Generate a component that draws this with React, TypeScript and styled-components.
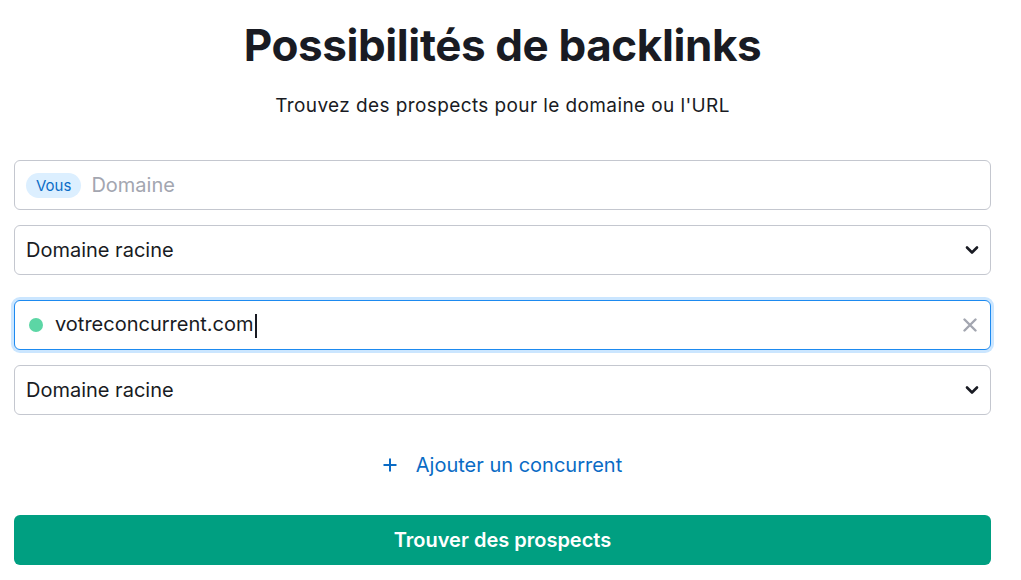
import React from "react"
import styled, { createGlobalStyle } from "styled-components"

const GlobalStyle = createGlobalStyle`
  body {
    margin: 0;
    background: #ffffff;
    font-family: Inter, "Noto Sans", sans-serif;
    color: #191b23;
  }
`

const Page = styled.div`
  width: 977px;
  margin-left: 14px;
  display: flex;
  flex-direction: column;
  align-items: stretch;
`

const Title = styled.h1`
  margin: 14px 0 0;
  text-align: center;
  font-size: 44px;
  line-height: 62px;
  font-weight: 700;
  letter-spacing: -0.4px;
  color: #191b23;
`

const Subtitle = styled.p`
  margin: 18px 0 0;
  text-align: center;
  font-size: 19px;
  line-height: 24px;
  letter-spacing: 0.4px;
  color: #191b23;
`

const Fields = styled.div`
  margin-top: 42px;
  display: flex;
  flex-direction: column;
`

const Group = styled.div`
  display: flex;
  flex-direction: column;
  gap: 15px;
  & + & {
    margin-top: 25px;
  }
`

const Field = styled.div<{ focused?: boolean }>`
  height: 50px;
  box-sizing: border-box;
  display: flex;
  align-items: center;
  padding: 0 8px 0 11px;
  border-radius: 6px;
  border: 1px solid ${(p) => (p.focused ? "#1d8af0" : "#c4c7cf")};
  box-shadow: ${(p) => (p.focused ? "0 0 0 3px #cbe6ff" : "none")};
  background: #fff;
  font-size: 20px;
  cursor: text;
`

const Badge = styled.span`
  display: inline-flex;
  align-items: center;
  height: 25px;
  padding: 0 10px;
  border-radius: 13px;
  background: #dcefff;
  color: #0b6cc6;
  font-size: 15px;
  margin-right: 10px;
`

const Placeholder = styled.span`
  color: #a3a6b0;
`

const Value = styled.span`
  flex: 1;
  color: #191b23;
`

const Caret = styled.span`
  display: inline-block;
  width: 2px;
  height: 24px;
  background: #191b23;
  vertical-align: middle;
  margin-left: 1px;
`

const Dot = styled.span`
  width: 14px;
  height: 14px;
  border-radius: 50%;
  background: #5cd6a5;
  margin: 0 12px 0 3px;
  flex: none;
`

const IconBox = styled.span<{ color: string; shift?: number }>`
  width: 20px;
  display: flex;
  justify-content: center;
  color: ${(p) => p.color};
  margin-right: ${(p) => p.shift ?? 0}px;
`

const AddLink = styled.div`
  margin-top: 38px;
  display: flex;
  justify-content: center;
  align-items: center;
  gap: 19px;
  font-size: 20px;
  color: #0a6bc5;
  cursor: pointer;
`

const Button = styled.button`
  margin-top: 38px;
  height: 50px;
  border: none;
  border-radius: 6px;
  background: #009f81;
  color: #ffffff;
  font-family: Inter, "Noto Sans", sans-serif;
  font-size: 20px;
  font-weight: 600;
  cursor: pointer;
`

const Chevron = () => (
  <svg width="14" height="10" viewBox="0 0 14 10">
    <path d="M2 2.5 L7 7.5 L12 2.5" fill="none" stroke="currentColor" strokeWidth="2.6" strokeLinecap="round" strokeLinejoin="round" />
  </svg>
)

const Cross = () => (
  <svg width="14" height="14" viewBox="0 0 14 14">
    <path d="M1.5 1.5 L12.5 12.5 M12.5 1.5 L1.5 12.5" fill="none" stroke="currentColor" strokeWidth="2.4" strokeLinecap="round" />
  </svg>
)

const Plus = () => (
  <svg width="14" height="14" viewBox="0 0 14 14">
    <path d="M7 0.5 V13.5 M0.5 7 H13.5" fill="none" stroke="currentColor" strokeWidth="2" />
  </svg>
)

export default function App() {
  return (
    <>
      <GlobalStyle />
      <Page>
        <Title>Possibilités de backlinks</Title>
        <Subtitle>Trouvez des prospects pour le domaine ou l'URL</Subtitle>
        <Fields>
          <Group>
            <Field>
              <Badge>Vous</Badge>
              <Placeholder>Domaine</Placeholder>
            </Field>
            <Field>
              <Value>Domaine racine</Value>
              <IconBox color="#191b23">
                <Chevron />
              </IconBox>
            </Field>
          </Group>
          <Group>
            <Field focused>
              <Dot />
              <Value>
                votreconcurrent.com
                <Caret />
              </Value>
              <IconBox color="#a3a6b0" shift={2}>
                <Cross />
              </IconBox>
            </Field>
            <Field>
              <Value>Domaine racine</Value>
              <IconBox color="#191b23">
                <Chevron />
              </IconBox>
            </Field>
          </Group>
        </Fields>
        <AddLink>
          <Plus />
          <span>Ajouter un concurrent</span>
        </AddLink>
        <Button>Trouver des prospects</Button>
      </Page>
    </>
  )
}
